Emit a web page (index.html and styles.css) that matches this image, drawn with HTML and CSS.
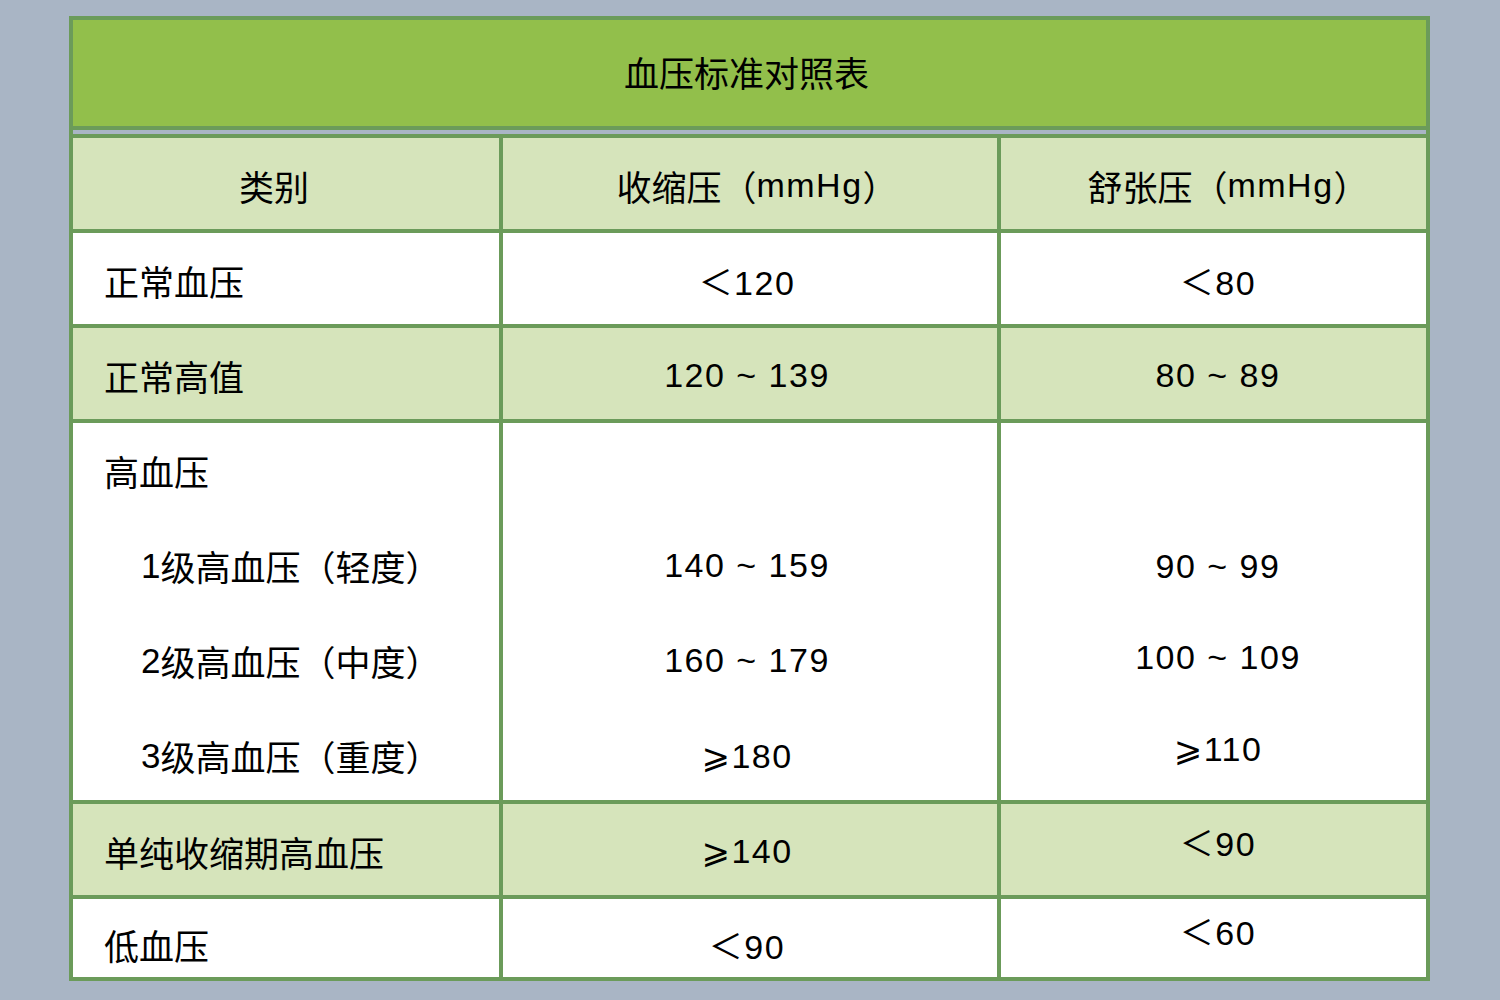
FILE: index.html
```html
<!DOCTYPE html>
<html lang="zh">
<head>
<meta charset="utf-8">
<title>血压标准对照表</title>
<link rel="stylesheet" href="styles.css">
</head>
<body>
<div class="sheet">
  <div class="title">血压标准对照表</div>
  <div class="grid">
    <div class="c hd c1 hd1">类别</div>
    <div class="c hd c2">收缩压（<span class="n">mmHg</span>）</div>
    <div class="c hd c3">舒张压（<span class="n">mmHg</span>）</div>

    <div class="c wt c1">正常血压</div>
    <div class="c wt c2"><span class="n">＜120</span></div>
    <div class="c wt c3"><span class="n">＜80</span></div>

    <div class="c lt c1">正常高值</div>
    <div class="c lt c2"><span class="n">120 ~ 139</span></div>
    <div class="c lt c3"><span class="n">80 ~ 89</span></div>

    <div class="c wt c1 stack">
      <div class="ln">高血压</div>
      <div class="ln sub"><span class="n1">1</span>级高血压（轻度）</div>
      <div class="ln sub"><span class="n1">2</span>级高血压（中度）</div>
      <div class="ln sub"><span class="n1">3</span>级高血压（重度）</div>
    </div>
    <div class="c wt c2 stack">
      <div class="ln"></div>
      <div class="ln"><span class="n">140 ~ 159</span></div>
      <div class="ln"><span class="n">160 ~ 179</span></div>
      <div class="ln"><span class="n">⩾180</span></div>
    </div>
    <div class="c wt c3 stack stack-r">
      <div class="ln"></div>
      <div class="ln"><span class="n">90 ~ 99</span></div>
      <div class="ln"><span class="n">100 ~ 109</span></div>
      <div class="ln"><span class="n">⩾110</span></div>
    </div>

    <div class="c lt c1">单纯收缩期高血压</div>
    <div class="c lt c2"><span class="n">⩾140</span></div>
    <div class="c lt c3 up17"><span class="n">＜90</span></div>

    <div class="c wt c1 down14">低血压</div>
    <div class="c wt c2 down14"><span class="n">＜90</span></div>
    <div class="c wt c3 up16"><span class="n">＜60</span></div>
  </div>
</div>
</body>
</html>
```
FILE: styles.css
```css
html, body {
  margin: 0;
  padding: 0;
}
body {
  background: #a9b5c5;
  font-family: "Liberation Sans", "Noto Sans CJK SC", "DejaVu Sans", sans-serif;
  font-size: 35px;
  color: #000;
  width: 1500px;
  height: 1000px;
  overflow: hidden;
}
.sheet {
  margin: 16px 0 0 69px;
  width: 1353px;
  border: 4px solid #6b9b5a;
  background: #a9b5c5;
}
.title {
  box-sizing: border-box;
  height: 110px;
  background: #92bf4b;
  border-bottom: 4px solid #6b9b5a;
  display: flex;
  align-items: center;
  justify-content: center;
  padding-bottom: 3px;
  padding-right: 6px;
}
.grid {
  margin-top: 4px;
  border-top: 4px solid #6b9b5a;
  display: grid;
  grid-template-columns: 426px 494px 425px;
  grid-template-rows: 91px 91px 91px 377px 91px 78px;
  gap: 4px;
  background: #6b9b5a;
}
.c {
  display: flex;
  align-items: center;
  box-sizing: border-box;
  padding-top: 3px;
  white-space: nowrap;
}
.hd { background: #d6e4bb; justify-content: center; }
.wt { background: #ffffff; }
.lt { background: #d6e4bb; }
.c1 { padding-left: 31px; }
.hd.c1 { padding-left: 0; }
.hd1 { padding-right: 24px; }
.c2 { justify-content: center; padding-right: 6px; }
.c3 { justify-content: center; padding-left: 9px; }
.hd.c2 { padding-right: 0; padding-left: 14px; }
.hd.c3 { padding-left: 29px; }
.n {
  font-size: 34px;
  letter-spacing: 1.5px;
}
.stack {
  display: block;
  padding-top: 0;
}
.stack .ln {
  height: 95px;
  display: flex;
  align-items: center;
}
.stack.c2 .ln, .stack.c3 .ln { justify-content: center; }
.stack-r { padding-top: 7px; }
.stack-r .ln { height: 91px; }
.sub { padding-left: 37px; }
.up17 { padding-top: 0; padding-bottom: 17px; }
.up16 { padding-top: 0; padding-bottom: 16px; }
.down14 { padding-top: 13px; }
```
